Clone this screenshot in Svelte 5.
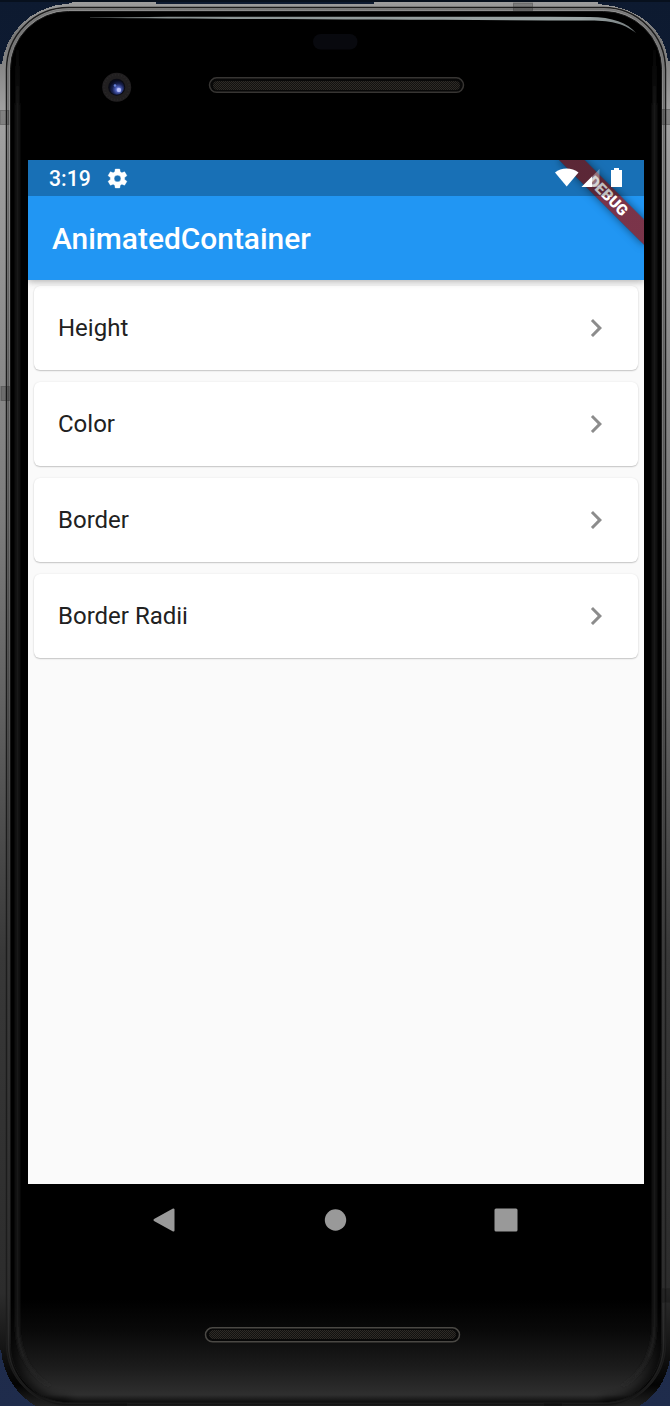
<script>
  const items = ['Height', 'Color', 'Border', 'Border Radii'];
</script>

<div class="device">
  <svg class="chassis" viewBox="0 0 670 1406" width="670" height="1406" aria-hidden="true">
    <defs>
      <linearGradient id="metal" x1="0" y1="0" x2="0" y2="1406" gradientUnits="userSpaceOnUse">
        <stop offset="0" stop-color="#a0a0a0" />
        <stop offset=".025" stop-color="#777" />
        <stop offset=".045" stop-color="#858585" />
        <stop offset=".08" stop-color="#a2a2a2" />
        <stop offset=".25" stop-color="#8b8b8b" />
        <stop offset=".37" stop-color="#7c7c7c" />
        <stop offset=".5" stop-color="#626262" />
        <stop offset=".68" stop-color="#383838" />
        <stop offset=".92" stop-color="#2c2c2c" />
        <stop offset=".96" stop-color="#141414" />
        <stop offset=".985" stop-color="#030303" />
        <stop offset="1" stop-color="#222" />
      </linearGradient>
      <linearGradient id="rim" x1="0" y1="0" x2="0" y2="1406" gradientUnits="userSpaceOnUse">
        <stop offset="0" stop-color="#777" />
        <stop offset=".3" stop-color="#5a5a5a" />
        <stop offset=".6" stop-color="#404040" />
        <stop offset=".95" stop-color="#2b2b2b" />
        <stop offset="1" stop-color="#141414" />
      </linearGradient>
      <linearGradient id="bevel" x1="0" y1="40" x2="0" y2="1400" gradientUnits="userSpaceOnUse">
        <stop offset="0" stop-color="#202020" stop-opacity="0" />
        <stop offset=".05" stop-color="#202020" />
        <stop offset=".96" stop-color="#222" />
        <stop offset="1" stop-color="#2c2c2c" stop-opacity="0" />
      </linearGradient>
      <linearGradient id="night" x1="0" y1="0" x2="0" y2="1">
        <stop offset="0" stop-color="#0d1a30" />
        <stop offset="1" stop-color="#1f2c4c" />
      </linearGradient>
      <linearGradient id="floor" x1="0" y1="1300" x2="0" y2="1402" gradientUnits="userSpaceOnUse">
        <stop offset="0" stop-color="#000" />
        <stop offset=".3" stop-color="#090909" />
        <stop offset=".65" stop-color="#1b1b1b" />
        <stop offset=".93" stop-color="#2f2f2f" />
        <stop offset="1" stop-color="#101010" />
      </linearGradient>
      <linearGradient id="shine" x1="90" y1="0" x2="636" y2="0" gradientUnits="userSpaceOnUse">
        <stop offset="0" stop-color="#889090" stop-opacity=".3" />
        <stop offset=".12" stop-color="#889090" />
        <stop offset=".9" stop-color="#9da7a7" />
        <stop offset="1" stop-color="#a5b0b2" stop-opacity=".7" />
      </linearGradient>
      <radialGradient id="lens" cx=".6" cy=".65" r=".6">
        <stop offset="0" stop-color="#a9b9ff" />
        <stop offset=".3" stop-color="#4b5cb4" />
        <stop offset=".65" stop-color="#182150" />
        <stop offset="1" stop-color="#080b1c" />
      </radialGradient>
      <pattern id="mesh" width="4" height="4" patternUnits="userSpaceOnUse">
        <rect width="4" height="4" fill="#12110f" />
        <path d="M0 0h1v1H0zM2 0h1v1H2zM1 1h1v1H1zM3 1h1v1H3zM0 2h1v1H0zM2 2h1v1H2zM1 3h1v1H1zM3 3h1v1H3z" fill="#2e2b27" />
      </pattern>
      <filter id="soft" filterUnits="userSpaceOnUse" x="0" y="0" width="670" height="1406">
        <feGaussianBlur stdDeviation="1.5" />
      </filter>
      <filter id="softer" filterUnits="userSpaceOnUse" x="0" y="1200" width="670" height="206">
        <feGaussianBlur stdDeviation="5" />
      </filter>
      <clipPath id="glass"><rect x="11" y="12" width="650" height="1390" rx="58" /></clipPath>
    </defs>

    <rect width="670" height="1406" fill="url(#night)" />
    <rect width="670" height="2" fill="#07101d" />
    <path d="M0 64h2C5 38 25 6 72 3V2h84v2h218V2h224v2c42 3 67 26 70 57h2v1298c-5 28-20 43-42 53H46C20 1399 4 1380 1 1350H0z" fill="url(#metal)" shape-rendering="crispEdges" />
    <rect x="6.500" y="7.500" width="659" height="1398" rx="62" fill="none" stroke="#1c1c1c" stroke-width="1.500" />
    <rect x="8.500" y="9.500" width="655" height="1395" rx="60" fill="none" stroke="url(#rim)" stroke-width="1.500" />
    <rect x="10.500" y="11.500" width="651" height="1391" rx="58" fill="#000" stroke="#151515" />
    <g fill="#000" fill-opacity=".2" stroke="#222" stroke-opacity=".3">
      <rect x="0" y="110.500" width="9" height="14" />
      <rect x="1" y="386.500" width="9" height="14" />
      <rect x="662" y="109.500" width="9" height="15" />
      <rect x="662" y="1288.500" width="9" height="14" />
      <rect x="513.500" y="3" width="19" height="8" />
      <rect x="543.500" y="1402.500" width="19" height="4" />
      <rect x="109.500" y="1402.500" width="18" height="4" />
    </g>
    <g clip-path="url(#glass)">
      <path d="M0 1300h670v106H0z" fill="url(#floor)" />
      <path d="M10 1280v64c0 34 26 60 60 60M662 1280v64c0 34-26 60-60 60" fill="none" stroke="#000" stroke-opacity=".8" stroke-width="9" filter="url(#softer)" />
      <path d="M17.500 40V1325c0 30 14 50 32 61M654.500 40V1325c0 30-14 50-32 61" fill="none" stroke="url(#bevel)" stroke-width="3" filter="url(#soft)" />
    </g>
    <path d="M90 17C220 16.500 400 16.500 590 17c22 0 38 6 46 16-10-8-22-12.500-46-12.500C400 20 220 19 90 18z" fill="url(#shine)" />

    <rect x="313" y="34" width="44.500" height="15.500" rx="7.700" fill="#08090e" />
    <circle cx="116.700" cy="87.300" r="14.500" fill="#211f20" />
    <circle cx="116.700" cy="87.300" r="12.500" fill="none" stroke="#292728" stroke-width="2" stroke-dasharray="1 2" />
    <circle cx="116.700" cy="87.300" r="8.500" fill="#0a0b14" />
    <circle cx="116.700" cy="87.300" r="7.500" fill="url(#lens)" />
    <circle cx="115" cy="85.500" r="1.300" fill="#6681d8" />
    <circle cx="119" cy="90" r="2.200" fill="#c6cbff" opacity=".8" />
    <g stroke-width="1.500">
      <rect x="209.500" y="77.800" width="254" height="14.500" rx="7.200" fill="#080808" stroke="#373533" />
      <rect x="205.500" y="1327.800" width="254" height="14" rx="7" fill="#080808" stroke="#4a4844" />
    </g>
    <rect x="213" y="81" width="247" height="9" rx="4.500" fill="url(#mesh)" />
    <rect x="209" y="1330" width="247" height="9" rx="4.500" fill="url(#mesh)" />
  </svg>

  <main class="screen">
    <header class="appbar">
      <h1>AnimatedContainer</h1>
    </header>
    <div class="banner-clip"><div class="banner">DEBUG</div></div>
    <div class="status">
      <span class="clock">3:19</span>
      <svg class="gear" viewBox="0 0 24 24" width="23" height="23">
        <path fill="#fff" stroke="#fff" stroke-width=".3" d="M19.430 12.980c.04-.32.07-.64.07-.98s-.03-.66-.07-.98l2.110-1.650c.19-.15.24-.42.12-.64l-2-3.460c-.12-.22-.39-.3-.61-.22l-2.490 1c-.52-.4-1.080-.73-1.690-.98l-.38-2.650A.49.49 0 0 0 14 2h-4c-.25 0-.46.18-.49.42l-.38 2.650c-.61.25-1.170.59-1.690.98l-2.490-1c-.23-.09-.49 0-.61.22l-2 3.460c-.13.22-.07.49.12.64l2.110 1.650c-.04.32-.07.65-.07.98s.03.66.07.98l-2.110 1.650c-.19.15-.24.42-.12.64l2 3.460c.12.22.39.3.61.22l2.490-1c.52.4 1.080.73 1.690.98l.38 2.650c.03.24.24.42.49.42h4c.25 0 .46-.18.49-.42l.38-2.650c.61-.25 1.170-.59 1.690-.98l2.490 1c.23.09.49 0 .61-.22l2-3.460c.12-.22.07-.49-.12-.64zM12 15.500a3.500 3.500 0 1 1 0-7 3.500 3.500 0 0 1 0 7z" />
      </svg>
      <svg class="signals" viewBox="0 0 68 20" width="68" height="20">
        <path fill="#fff" d="M0 4.500C6-1 17-1 23.500 4.500L11.700 18.500z" />
        <path fill="#fff" fill-opacity=".35" d="M26.500 19L44.500 1v18z" />
        <path fill="#fff" d="M26.500 19L37 8.500V19z" />
        <path fill="#fff" d="M59 0h5v2h3v17H56V2h3z" />
      </svg>
    </div>
    <ul>
      {#each items as item}
        <li>
          <span>{item}</span>
          <svg viewBox="0 0 24 24" width="36" height="36"><path fill="#8c8c8c" d="M10 6 8.590 7.410 13.170 12l-4.580 4.590L10 18l6-6z" /></svg>
        </li>
      {/each}
    </ul>
  </main>

  <nav>
    <svg viewBox="0 0 24 26" width="24" height="26"><path d="M21.500 2.500v21L2.500 13z" fill="#999" stroke="#999" stroke-width="2" stroke-linejoin="round" /></svg>
    <svg viewBox="0 0 24 24" width="24" height="24"><circle cx="12.500" cy="12" r="10.700" fill="#999" /></svg>
    <svg viewBox="0 0 24 24" width="24" height="24"><rect x=".5" y=".5" width="23" height="23" rx="1.500" fill="#999" /></svg>
  </nav>
</div>

<style>
  :global(body) {
    margin: 0;
    background: #000;
  }
  .device {
    position: relative;
    box-sizing: border-box;
    width: 670px;
    height: 1406px;
    padding: 160px 26px 0 28px;
    overflow: hidden;
    font-family: Roboto, sans-serif;
  }
  .chassis {
    position: absolute;
    inset: 0;
  }
  .screen {
    position: relative;
    height: 1024px;
    overflow: hidden;
    background: #fafafa;
  }
  .appbar {
    position: relative;
    box-sizing: border-box;
    height: 120px;
    padding: 38px 24px 0;
    display: flex;
    align-items: center;
    background: #2196f3;
    box-shadow: 0 2px 6px rgba(0, 0, 0, 0.22), 0 1px 10px rgba(0, 0, 0, 0.08);
  }
  h1 {
    margin: 0;
    color: #fff;
    font-size: 29.900px;
    font-weight: 500;
    line-height: 36px;
  }
  .banner-clip {
    position: absolute;
    inset: 0 0 auto auto;
    width: 120px;
    height: 120px;
    overflow: hidden;
  }
  .banner {
    position: absolute;
    left: 60px;
    top: 42px;
    width: 120px;
    height: 18px;
    transform: rotate(45deg);
    transform-origin: 60px -42px;
    background:
      linear-gradient(rgba(183, 28, 28, 0.627), rgba(183, 28, 28, 0.627)),
      rgba(0, 0, 0, 0.38);
    box-shadow: 0 0 9px rgba(0, 0, 0, 0.5);
    color: #fff;
    font-size: 15.300px;
    font-weight: 900;
    line-height: 18px;
    text-align: center;
  }
  .status {
    position: absolute;
    inset: 0 0 auto;
    height: 36px;
    display: flex;
    align-items: center;
    padding: 0 21px;
    box-sizing: border-box;
    background: rgba(0, 0, 0, 0.25);
    color: #fff;
  }
  .clock {
    font-size: 21.200px;
    font-weight: 500;
    line-height: 36px;
    padding-top: 2px;
  }
  .gear {
    margin-left: 15.500px;
  }
  .signals {
    margin-left: auto;
  }
  ul {
    list-style: none;
    margin: 0;
    padding: 6px;
    display: flex;
    flex-direction: column;
    gap: 12px;
  }
  li {
    display: flex;
    align-items: center;
    justify-content: space-between;
    box-sizing: border-box;
    height: 84px;
    padding: 0 24px;
    border-radius: 6px;
    background: #fff;
    box-shadow: 0 1px 1.500px rgba(0, 0, 0, 0.2), 0 0 2px rgba(0, 0, 0, 0.08);
    color: #212121;
    font-size: 24px;
    line-height: 30px;
  }
  nav {
    position: relative;
    height: 72px;
    display: flex;
    align-items: center;
    justify-content: space-between;
    padding: 0 126px 0 124px;
  }
</style>
